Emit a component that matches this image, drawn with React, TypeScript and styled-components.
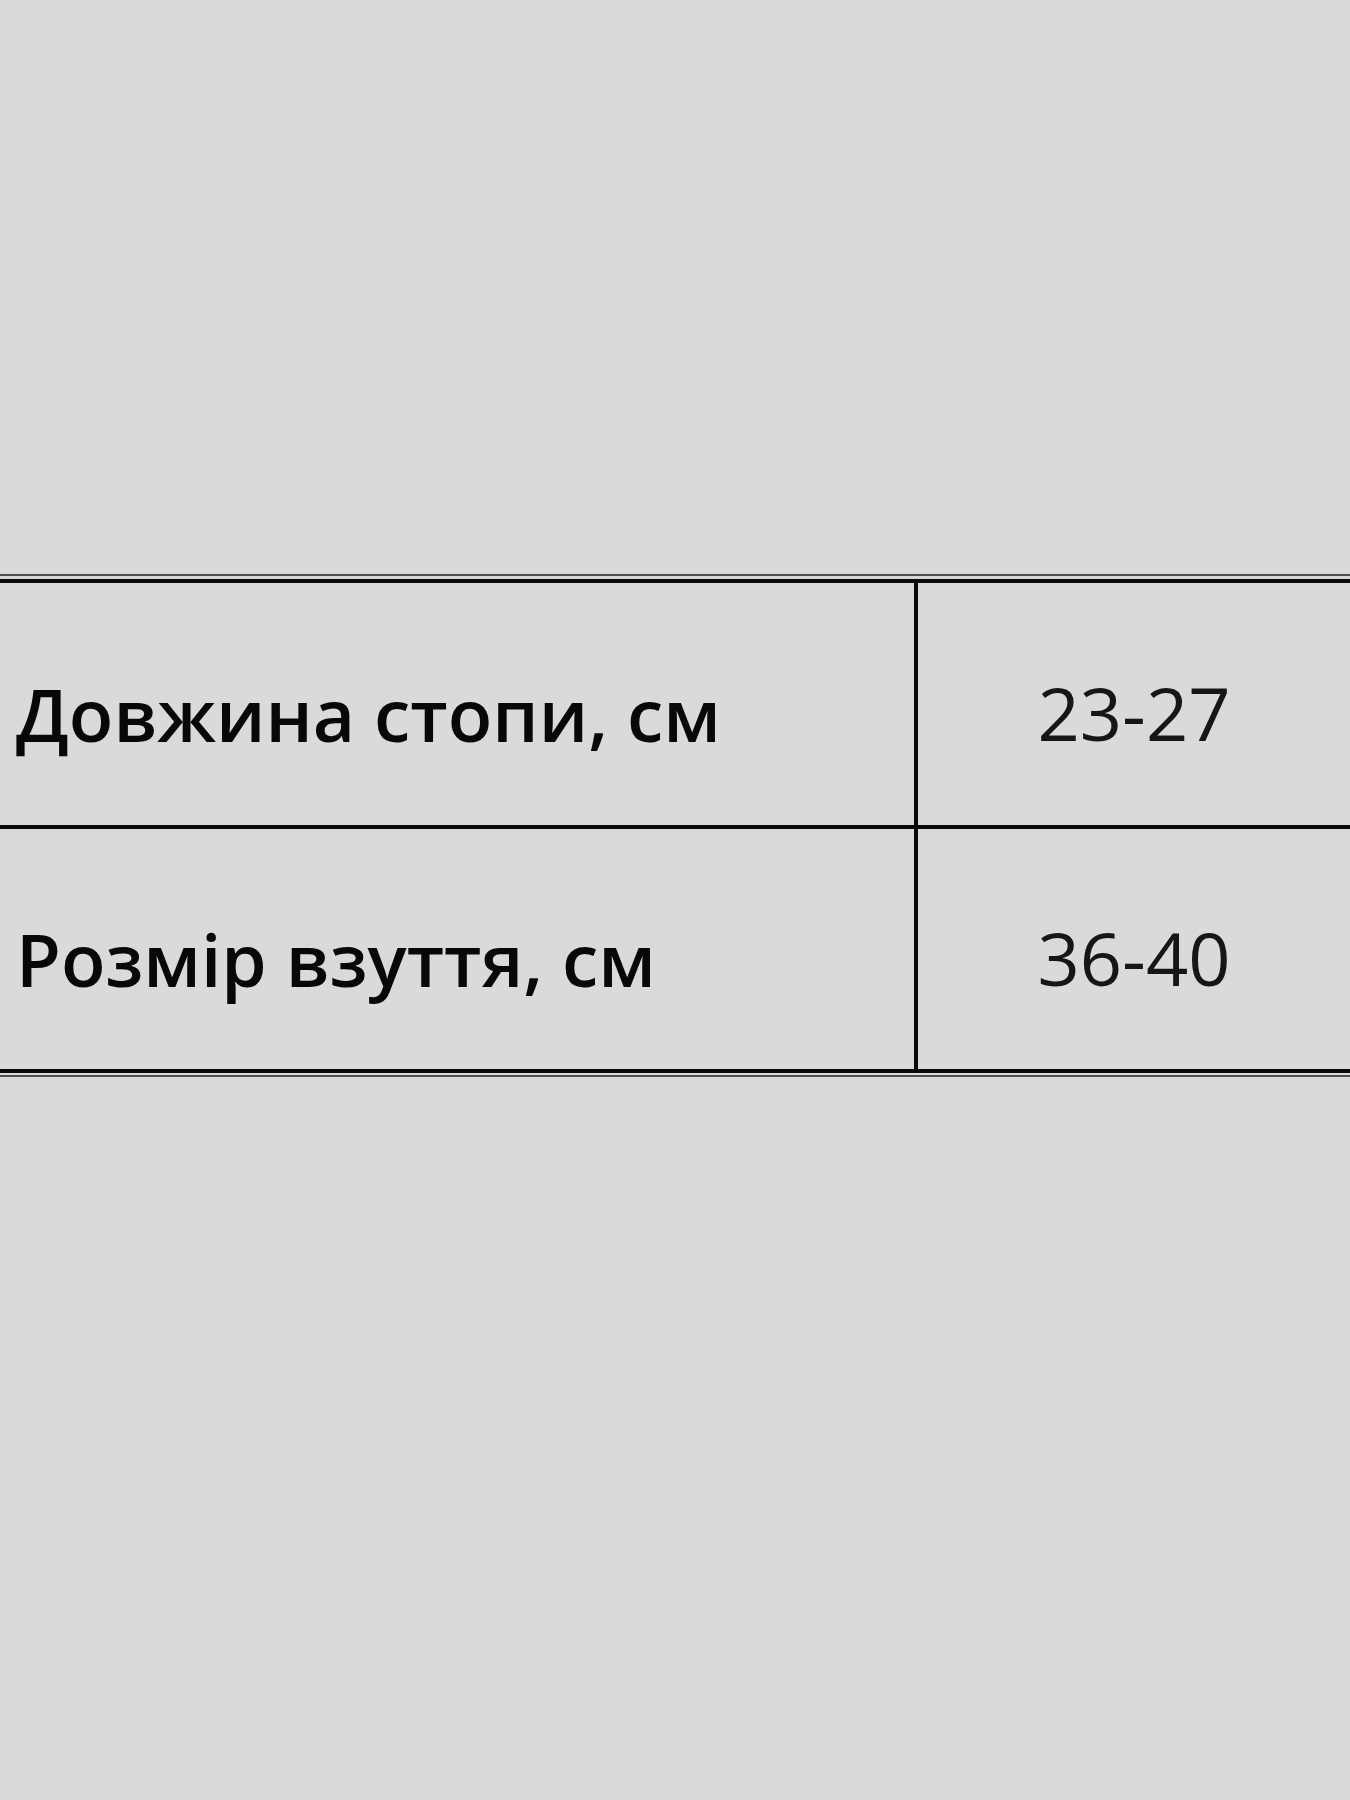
import React from "react";
import styled, { createGlobalStyle } from "styled-components";

const GlobalStyle = createGlobalStyle`
  html, body {
    margin: 0;
    padding: 0;
    background: #dadada;
  }
  body {
    font-family: "Open Sans", "Noto Sans", "DejaVu Sans", sans-serif;
    -webkit-font-smoothing: antialiased;
  }
`;

const Page = styled.div`
  width: 1350px;
  height: 1800px;
  background: #dadada;
  padding-top: 574px;
  box-sizing: border-box;
`;

const Rule = styled.div`
  height: 2px;
  background: #4d4d4d;
`;

const Spacer = styled.div<{ $h: number }>`
  height: ${(p) => p.$h}px;
`;

const Table = styled.div`
  display: grid;
  grid-template-columns: 918px 1fr;
  grid-template-rows: 246px 240px;
  border-top: 4px solid #0a0a0a;
  border-bottom: 4px solid #0a0a0a;
`;

const Cell = styled.div<{ $last?: boolean; $shift: number; $label?: boolean }>`
  box-sizing: border-box;
  display: flex;
  align-items: center;
  justify-content: ${(p) => (p.$label ? "flex-start" : "center")};
  padding-top: ${(p) => p.$shift}px;
  padding-left: ${(p) => (p.$label ? "16px" : "0")};
  border-right: ${(p) => (p.$label ? "4px solid #0a0a0a" : "none")};
  border-bottom: ${(p) => (p.$last ? "none" : "4px solid #0a0a0a")};
`;

const Label = styled.span`
  font-family: "Open Sans", "Noto Sans", sans-serif;
  font-weight: 600;
  font-size: 73px;
  line-height: 1;
  color: #080808;
`;

const Value = styled.span`
  font-family: "Open Sans", "Noto Sans", sans-serif;
  font-weight: 400;
  font-size: 74px;
  line-height: 1;
  color: #161616;
`;

const rows = [
  { label: "Довжина стопи, см", value: "23-27", shift: 18 },
  { label: "Розмір взуття, см", value: "36-40", shift: 18 },
];

export default function App() {
  return (
    <>
      <GlobalStyle />
      <Page>
        <Rule />
        <Spacer $h={3} />
        <Table>
          {rows.map((r, i) => (
            <React.Fragment key={r.label}>
              <Cell $label $shift={r.shift} $last={i === rows.length - 1}>
                <Label>{r.label}</Label>
              </Cell>
              <Cell $shift={r.shift} $last={i === rows.length - 1}>
                <Value>{r.value}</Value>
              </Cell>
            </React.Fragment>
          ))}
        </Table>
        <Spacer $h={2} />
        <Rule />
      </Page>
    </>
  );
}
